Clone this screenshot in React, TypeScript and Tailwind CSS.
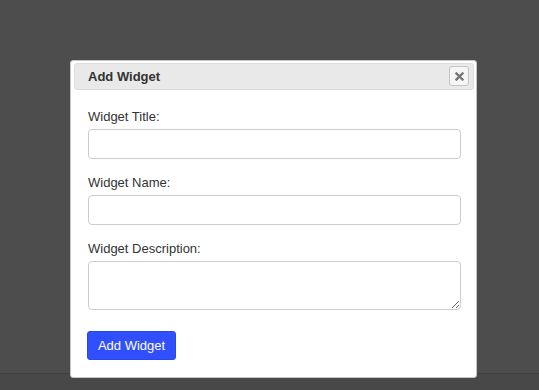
export default function App() {
  return (
    <div className="relative w-[539px] h-[390px] overflow-hidden font-['Liberation_Sans',Arial,sans-serif] text-[#333333]">
      <div className="h-[373px] bg-[#4d4d4d]" />
      <div className="h-[1px] bg-[#404040]" />
      <div className="h-[16px] bg-[#484848]" />

      {/* dialog */}
      <div className="absolute left-[70px] top-[60px] w-[407px] h-[318px] bg-white border border-[#c5c5c5] rounded-[3px] pl-[3px] pr-[2px] pt-[2px] flex flex-col">
        <div className="relative h-[27px] flex items-center px-[13px] bg-[#e9e9e9] border border-[#dddddd] rounded-[3px]">
          <span className="text-[13px] font-bold leading-[15px]">Add Widget</span>
          <button className="absolute right-[4px] top-[2px] w-[20px] h-[20px] flex items-center justify-center bg-[#f6f6f6] border border-[#c5c5c5] rounded-[3px]">
            <svg width="9" height="9" viewBox="0 0 9 9">
              <path d="M1.5 1.5 L7.5 7.5 M7.5 1.5 L1.5 7.5" stroke="#777777" strokeWidth="2.4" strokeLinecap="square" />
            </svg>
          </button>
        </div>

        <form className="flex flex-col pl-[14px] pt-[19px] text-[13px]">
          <label className="block leading-[15px] mb-[5px]">Widget Title:</label>
          <input className="h-[30px] w-[373px] border border-[#cccccc] rounded-[4px] mb-[16px] px-2 outline-none" />
          <label className="block leading-[15px] mb-[5px]">Widget Name:</label>
          <input className="h-[30px] w-[373px] border border-[#cccccc] rounded-[4px] mb-[16px] px-2 outline-none" />
          <label className="block leading-[15px] mb-[5px]">Widget Description:</label>
          <textarea className="h-[49px] w-[373px] border border-[#cccccc] rounded-[4px] mb-[21px] px-2 outline-none" />
          <button
            type="button"
            className="w-[89px] h-[29px] -ml-[1px] bg-[#304ffe] text-white text-[13px] leading-[15px] rounded-[3px] border border-[#2b47e6]"
          >
            Add Widget
          </button>
        </form>
      </div>
    </div>
  );
}
